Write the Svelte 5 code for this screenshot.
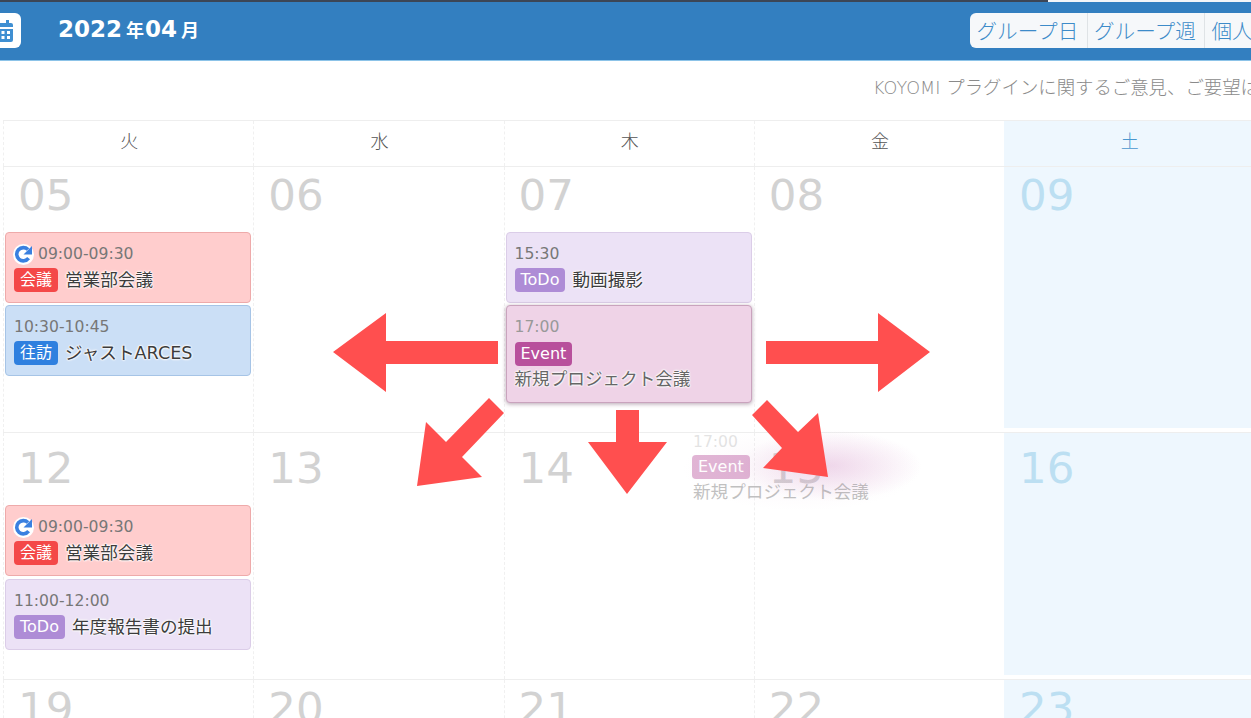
<script>
  const days = ["火", "水", "木", "金", "土"];

  const weeks = [
    {
      cls: "week-1",
      cells: [
        { day: "05", events: [
          { kind: "red", repeat: true, time: "09:00-09:30", badge: "会議", title: "営業部会議" },
          { kind: "blue", time: "10:30-10:45", badge: "往訪", title: "ジャストARCES" },
        ] },
        { day: "06", events: [] },
        { day: "07", events: [
          { kind: "purple", time: "15:30", badge: "ToDo", title: "動画撮影" },
          { kind: "pink", time: "17:00", badge: "Event", title: "新規プロジェクト会議", stack: true },
        ] },
        { day: "08", events: [] },
        { day: "09", events: [], sat: true },
      ],
    },
    {
      cls: "week-2",
      cells: [
        { day: "12", events: [
          { kind: "red", repeat: true, time: "09:00-09:30", badge: "会議", title: "営業部会議" },
          { kind: "purple", time: "11:00-12:00", badge: "ToDo", title: "年度報告書の提出" },
        ] },
        { day: "13", events: [] },
        { day: "14", events: [] },
        { day: "15", events: [] },
        { day: "16", events: [], sat: true },
      ],
    },
    {
      cls: "week-3",
      cells: [
        { day: "19", events: [] },
        { day: "20", events: [] },
        { day: "21", events: [] },
        { day: "22", events: [] },
        { day: "23", events: [], sat: true },
      ],
    },
  ];

  const arrows = [
    "498,341 386,341 386,313 333,352 386,392 386,364 498,364",
    "766,341 878,341 878,313 930,352 878,392 878,364 766,364",
    "616,410 639,410 639,442 667,442 627,494 588,442 616,442",
    "489,398 504,413 462,457 482,477 417,486 426,422 446,442",
    "767,400 752,415 782,448 763,468 828,477 818,413 798,432",
  ];
</script>

<div class="page">
  <div class="topline"></div>

  <header class="bar">
    <div class="bar-left">
      <div class="cal-btn">
        <svg width="22" height="22" viewBox="0 0 22 22">
          <rect x="5" y="0" width="3" height="4" fill="#3f8fd2" />
          <rect x="14" y="0" width="3" height="4" fill="#3f8fd2" />
          <path d="M1 5a2 2 0 0 1 2-2h16a2 2 0 0 1 2 2v2H1z" fill="#3f8fd2" />
          <path d="M1 9h20v11a2 2 0 0 1-2 2H3a2 2 0 0 1-2-2z" fill="#3f8fd2" />
          <g fill="#fff">
            <rect x="4" y="11" width="3" height="3" />
            <rect x="9.5" y="11" width="3" height="3" />
            <rect x="15" y="11" width="3" height="3" />
            <rect x="4" y="16" width="3" height="3" />
            <rect x="9.5" y="16" width="3" height="3" />
            <rect x="15" y="16" width="3" height="3" />
          </g>
        </svg>
      </div>
      <div class="title">
        <span class="big">2022</span><span class="small">年</span><span class="big">04</span><span class="small">月</span>
      </div>
    </div>
    <div class="tabs">
      <span class="tab">グループ日</span>
      <span class="tab">グループ週</span>
      <span class="tab">個人日</span>
    </div>
  </header>

  <div class="notice"><span class="brand">KOYOMI</span> プラグインに関するご意見、ご要望はこちら</div>

  <div class="calendar">
    <div class="row head">
      {#each days as d, i}
        <div class="cell" class:sat={i === 4}>{d}</div>
      {/each}
    </div>

    {#each weeks as week}
      <div class="row {week.cls}">
        {#each week.cells as cell}
          <div class="cell" class:sat={cell.sat}>
            <div class="num">{cell.day}</div>
            <div class="events">
              {#each cell.events as ev}
                <div class="event {ev.kind}" class:stack={ev.stack}>
                  <div class="time">
                    {#if ev.repeat}
                      <svg class="repeat" width="21" height="21" viewBox="0 0 21 21">
                        <circle cx="10.5" cy="10.5" r="10.5" fill="#fff" />
                        <path d="M15.6 14.2A6.6 6.6 0 1 1 15 5.6" fill="none" stroke="#3a80e0" stroke-width="3.6" />
                        <path d="M19 2v8.5h-8.5z" fill="#3a80e0" />
                      </svg>
                    {/if}
                    {ev.time}
                  </div>
                  <div class="line">
                    <span class="badge">{ev.badge}</span><span class="name">{ev.title}</span>
                  </div>
                </div>
              {/each}
            </div>
          </div>
        {/each}
      </div>
    {/each}
  </div>

  <!-- drag ghost, floats over the grid -->
  <div class="ghost">
    <div class="glow"></div>
    <div class="time">17:00</div>
    <span class="badge">Event</span>
    <div class="name">新規プロジェクト会議</div>
  </div>

  <svg class="arrows" width="1251" height="718" viewBox="0 0 1251 718">
    {#each arrows as pts}
      <polygon points={pts} fill="#ff4f4f" />
    {/each}
  </svg>
</div>

<style>
  :global(body) {
    margin: 0;
    background: #fff;
    overflow: hidden;
  }

  .page {
    position: relative;
    width: 1251px;
    height: 718px;
    overflow: hidden;
    font-family: "DejaVu Sans", "Noto Sans CJK JP", sans-serif;
    color: #666;
  }

  .topline {
    height: 2px;
    background: linear-gradient(to right, #3c4656 1048px, #f4f6f8 1048px);
  }

  .bar {
    height: 59px;
    box-sizing: border-box;
    background: #337fc0;
    border-bottom: 1px solid #8cc3e8;
    display: flex;
    justify-content: space-between;
    align-items: flex-start;
    padding-top: 11px;
  }

  .bar-left {
    display: flex;
    align-items: center;
    margin-left: -15px;
  }

  .cal-btn {
    width: 36px;
    height: 35px;
    background: #fff;
    border-radius: 6px;
    display: flex;
    align-items: center;
    justify-content: flex-end;
    box-sizing: border-box;
  }

  .cal-btn svg {
    margin-right: 7px;
  }

  .title {
    margin-left: 37px;
    margin-top: -3px;
    color: #fff;
    font-weight: 700;
    display: flex;
    align-items: center;
  }

  .big {
    font-size: 23px;
  }

  .small {
    font-family: "Noto Sans CJK JP", sans-serif;
    font-size: 18px;
    margin: 0 1px 0 4px;
  }

  .tabs {
    display: flex;
    height: 35px;
    flex: none;
    width: 281px;
    background: #f6f8fa;
    border-radius: 6px 0 0 6px;
    overflow: hidden;
    font-family: "Noto Sans CJK JP", sans-serif;
    font-size: 20.6px;
    font-weight: 300;
    color: #3d8bc9;
  }

  .tab {
    flex: none;
    width: 117.5px;
    box-sizing: border-box;
    padding-left: 6.5px;
    line-height: 35px;
    border-right: 1px solid #dfe3e6;
    white-space: nowrap;
  }

  .notice {
    height: 59px;
    box-sizing: border-box;
    padding: 14px 0 0 873px;
    font-size: 18.4px;
    font-weight: 300;
    line-height: 25px;
    white-space: nowrap;
    color: #8a8a8a;
  }

  .brand {
    font-size: 17.6px;
  }

  .calendar {
    margin-left: 3px;
    width: 1255px;
  }

  .row {
    display: grid;
    grid-template-columns: repeat(5, 250.25px);
    border-top: 1px solid #eeeeee;
    box-sizing: border-box;
  }

  .cell {
    border-left: 1px dashed #f0f0f0;
    box-sizing: border-box;
    min-width: 0;
  }

  .head {
    height: 46px;
  }

  .head .cell {
    text-align: center;
    padding-left: 1px;
    line-height: 39px;
    font-family: "Noto Sans CJK JP", sans-serif;
    font-size: 18px;
    font-weight: 300;
    color: #555;
  }

  .head .cell.sat {
    color: #4a97cf;
  }

  .sat {
    background: #eef7fe;
    border-left: none;
    border-bottom: 4px solid #fff;
  }

  .head .sat {
    border-bottom: none;
  }

  .week-1 {
    height: 266px;
  }

  .week-2 {
    height: 247px;
  }

  .week-3 {
    height: 100px;
  }

  .num {
    padding-left: 14px;
    font-size: 43.5px;
    line-height: 50px;
    margin-top: 3px;
    color: #d2d2d2;
  }

  .sat .num {
    padding-left: 15px;
    color: #bcdff2;
  }

  .week-1 .events {
    margin-top: 12px;
    gap: 2px;
  }

  .week-2 .num {
    margin-top: 10px;
  }

  .week-2 .events {
    margin-top: 12px;
    gap: 3px;
  }

  .events {
    display: flex;
    flex-direction: column;
  }

  .event {
    margin: 0 2px 0 1px;
    height: 71px;
    box-sizing: border-box;
    border: 1px solid;
    border-radius: 4px;
    padding: 9px 8px 0;
  }

  .event.stack {
    height: 98px;
    box-shadow: 0 1px 4px rgba(90, 50, 80, 0.45);
  }

  .red {
    background: #ffcdcd;
    border-color: #eeaaaa;
  }

  .blue {
    background: #cbdff6;
    border-color: #a6c4e6;
  }

  .purple {
    background: #ece2f6;
    border-color: #dbcde8;
  }

  .pink {
    background: #efd3e7;
    border-color: #c9a3bd;
  }

  .time {
    display: flex;
    align-items: center;
    height: 24px;
    font-size: 15.6px;
    color: #777;
    gap: 4px;
    white-space: nowrap;
  }

  .pink .time {
    color: #999;
  }

  .repeat {
    margin-left: -1px;
    flex: none;
  }

  .line {
    margin-top: 2px;
    white-space: nowrap;
  }

  .stack .line {
    margin-top: 3px;
    white-space: normal;
    display: flex;
    flex-direction: column;
    align-items: flex-start;
  }

  .badge {
    display: inline-block;
    height: 24px;
    line-height: 23px;
    padding: 0 6px;
    border-radius: 4px;
    font-size: 16px;
    color: #fff;
    vertical-align: top;
  }

  .red .badge {
    background: #f44848;
  }

  .blue .badge {
    background: #2f80df;
  }

  .purple .badge {
    background: #ae8cd6;
  }

  .pink .badge,
  .ghost .badge {
    background: #b8509c;
  }

  .name {
    font-size: 17.6px;
    line-height: 24px;
    margin-left: 7px;
    color: #3c3c3c;
    text-shadow: 0 0 2px #fff, 0 0 2px #fff, 0 0 2px #fff, 0 0 3px #fff;
  }

  .stack .name {
    margin-left: 0;
    color: #666;
    line-height: 27px;
  }

  .ghost {
    position: absolute;
    left: 692px;
    top: 431px;
    width: 230px;
    color: #888;
    white-space: nowrap;
  }

  .ghost .time,
  .ghost .badge,
  .ghost .name {
    position: relative;
  }

  .ghost .time {
    opacity: 0.2;
    height: 22px;
    margin-left: 1px;
  }

  .ghost .badge {
    opacity: 0.42;
    margin-top: 2px;
  }

  .ghost .name {
    margin: 0 0 0 1px;
    line-height: 27px;
    text-shadow: none;
    color: #777;
    opacity: 0.45;
  }

  .glow {
    position: absolute;
    left: -10px;
    top: -4px;
    width: 240px;
    height: 84px;
    background:
      radial-gradient(ellipse 38% 42% at 62% 46%, rgba(205, 125, 190, 0.26), rgba(205, 125, 190, 0) 100%),
      radial-gradient(ellipse 50% 50% at 50% 50%, rgba(215, 170, 205, 0.12), rgba(215, 170, 205, 0) 100%);
  }

  .arrows {
    position: absolute;
    left: 0;
    top: 0;
    pointer-events: none;
  }
</style>
